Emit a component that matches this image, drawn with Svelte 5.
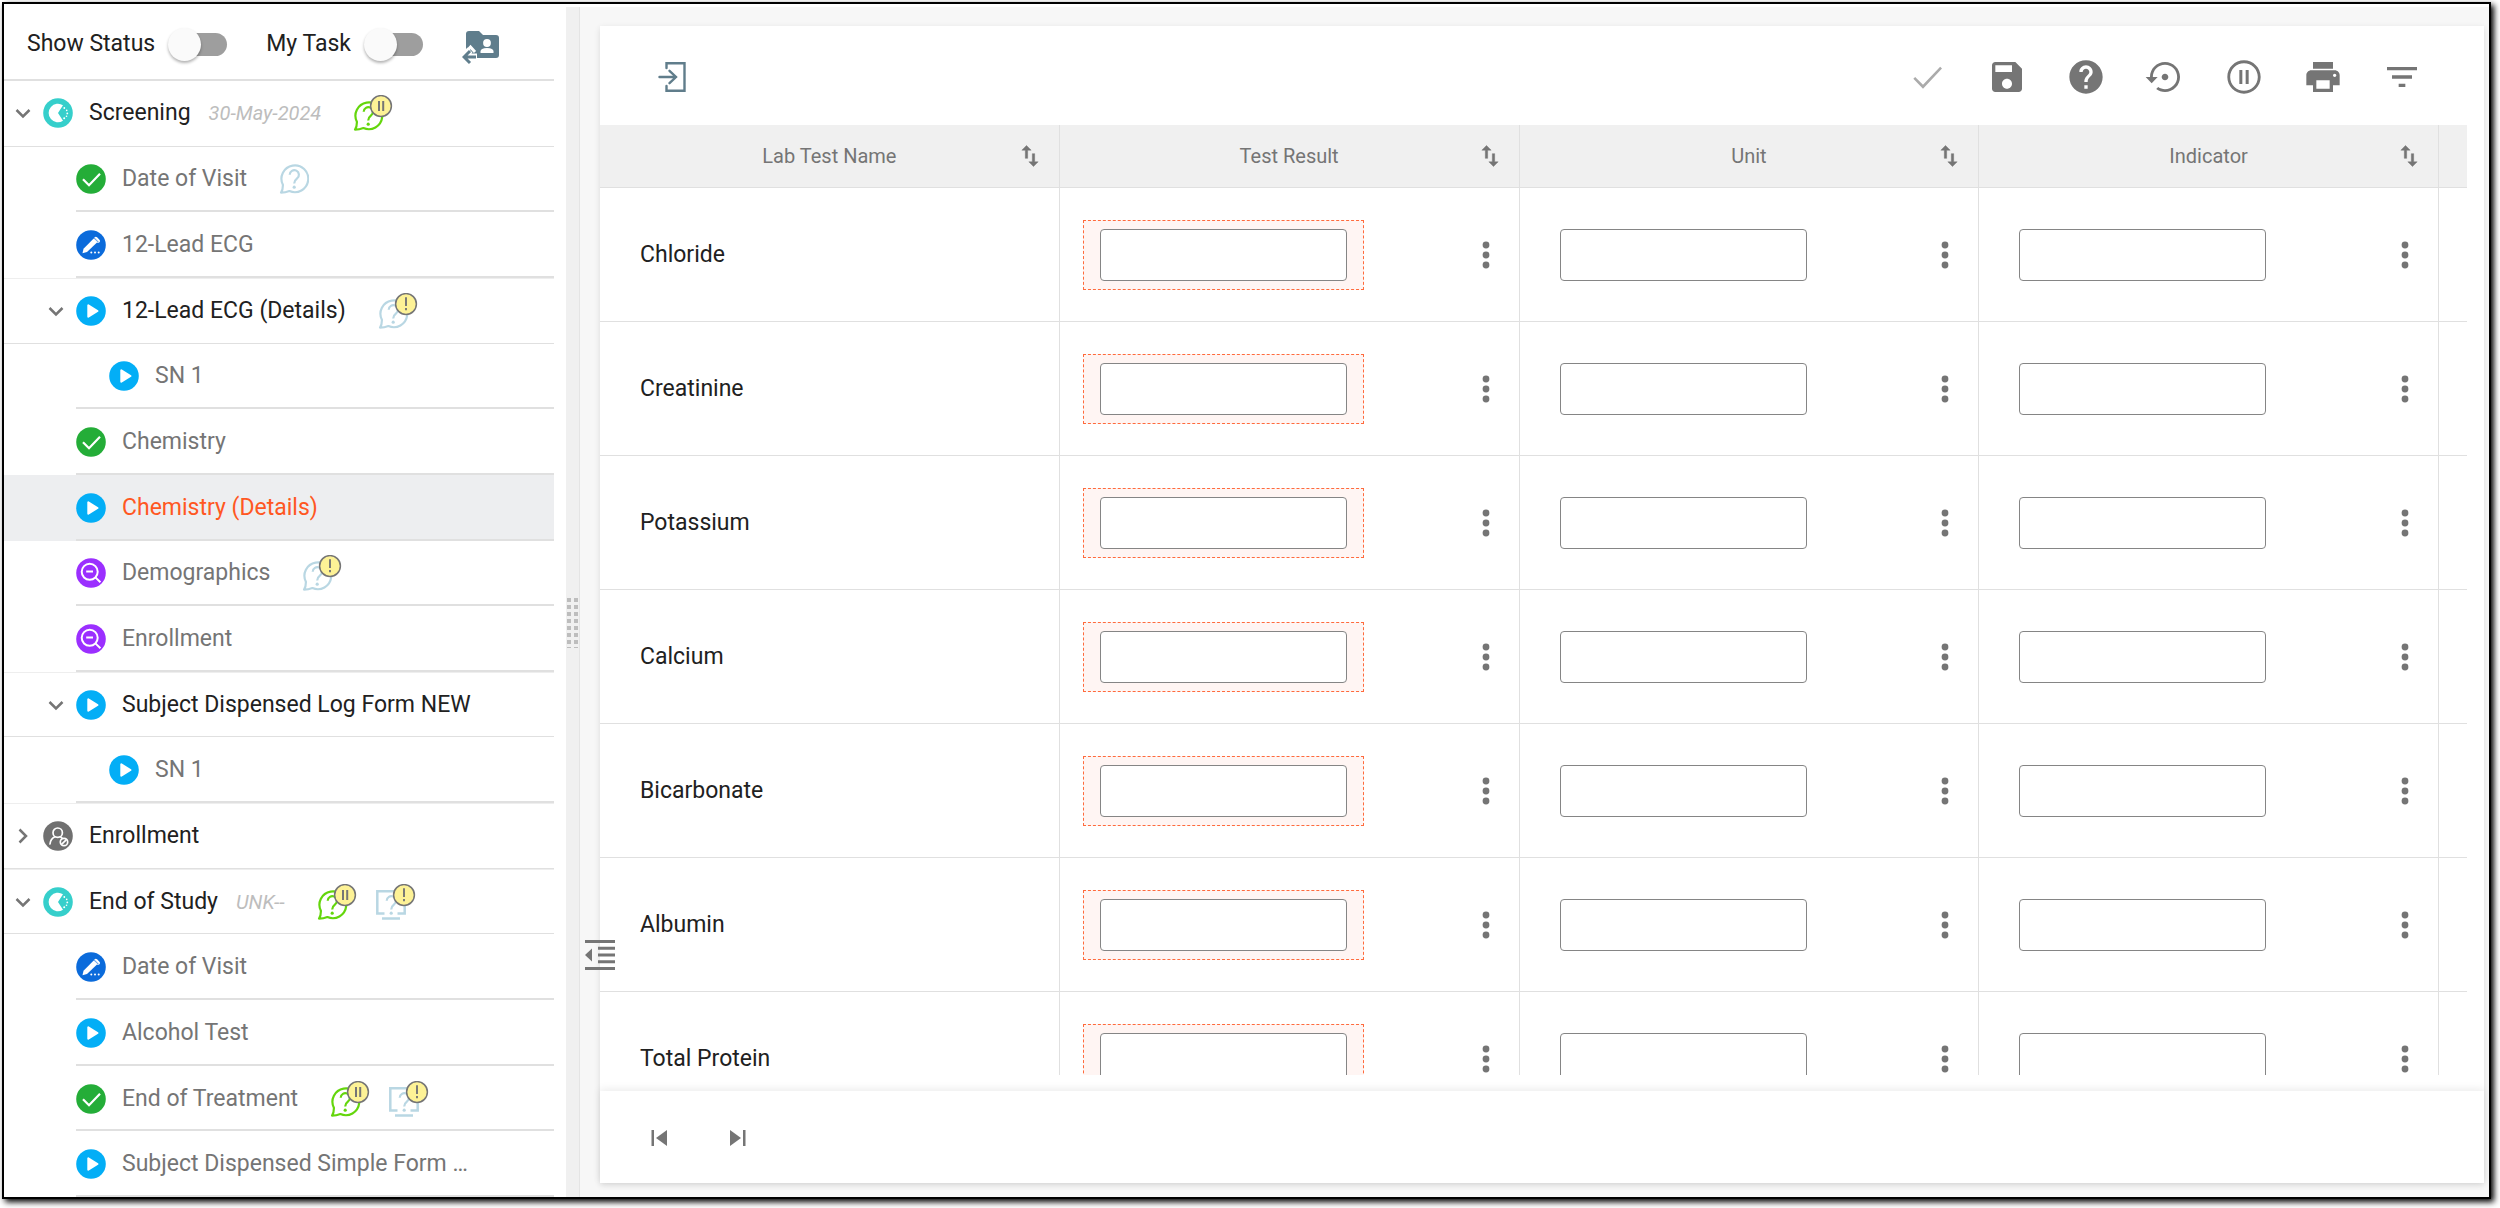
<script lang="ts">
	interface Query {
		kind: 'chat' | 'monitor';
		tone: 'green' | 'blue';
		badge?: 'pause' | 'alert';
	}

	interface TreeItem {
		label: string;
		level: number;
		status: string;
		date?: string;
		open?: boolean;
		selected?: boolean;
		queries?: Query[];
	}

	const items: TreeItem[] = [
		{
			label: 'Screening',
			level: 0,
			status: 'progress',
			date: '30-May-2024',
			open: true,
			queries: [{ kind: 'chat', tone: 'green', badge: 'pause' }]
		},
		{ label: 'Date of Visit', level: 1, status: 'done', queries: [{ kind: 'chat', tone: 'blue' }] },
		{ label: '12-Lead ECG', level: 1, status: 'edit' },
		{
			label: '12-Lead ECG (Details)',
			level: 1,
			status: 'play',
			open: true,
			queries: [{ kind: 'chat', tone: 'blue', badge: 'alert' }]
		},
		{ label: 'SN 1', level: 2, status: 'play' },
		{ label: 'Chemistry', level: 1, status: 'done' },
		{ label: 'Chemistry (Details)', level: 1, status: 'play', selected: true },
		{
			label: 'Demographics',
			level: 1,
			status: 'review',
			queries: [{ kind: 'chat', tone: 'blue', badge: 'alert' }]
		},
		{ label: 'Enrollment', level: 1, status: 'review' },
		{ label: 'Subject Dispensed Log Form NEW', level: 1, status: 'play', open: true },
		{ label: 'SN 1', level: 2, status: 'play' },
		{ label: 'Enrollment', level: 0, status: 'blocked', open: false },
		{
			label: 'End of Study',
			level: 0,
			status: 'progress',
			date: 'UNK--',
			open: true,
			queries: [
				{ kind: 'chat', tone: 'green', badge: 'pause' },
				{ kind: 'monitor', tone: 'blue', badge: 'alert' }
			]
		},
		{ label: 'Date of Visit', level: 1, status: 'edit' },
		{ label: 'Alcohol Test', level: 1, status: 'play' },
		{
			label: 'End of Treatment',
			level: 1,
			status: 'done',
			queries: [
				{ kind: 'chat', tone: 'green', badge: 'pause' },
				{ kind: 'monitor', tone: 'blue', badge: 'alert' }
			]
		},
		{ label: 'Subject Dispensed Simple Form …', level: 1, status: 'play' }
	];

	const columns = ['Lab Test Name', 'Test Result', 'Unit', 'Indicator'];

	const tests = [
		'Chloride',
		'Creatinine',
		'Potassium',
		'Calcium',
		'Bicarbonate',
		'Albumin',
		'Total Protein'
	];

	const tools = [
		{
			name: 'Save',
			path: 'M17 3H5c-1.11 0-2 .9-2 2v14c0 1.1.89 2 2 2h14c1.1 0 2-.9 2-2V7l-4-4zm-5 16c-1.66 0-3-1.34-3-3s1.34-3 3-3 3 1.34 3 3-1.34 3-3 3zm3-10H5V5h10v4z'
		},
		{
			name: 'Help',
			path: 'M12 2C6.48 2 2 6.48 2 12s4.48 10 10 10 10-4.48 10-10S17.52 2 12 2zm1 17h-2v-2h2v2zm2.07-7.75l-.9.92C13.45 12.9 13 13.5 13 15h-2v-.5c0-1.1.45-2.1 1.17-2.83l1.24-1.26c.37-.36.59-.86.59-1.41 0-1.1-.9-2-2-2s-2 .9-2 2H8c0-2.21 1.79-4 4-4s4 1.79 4 4c0 .88-.36 1.68-.93 2.25z'
		},
		{
			name: 'Restore',
			path: 'M14 12c0-1.1-.9-2-2-2s-2 .9-2 2 .9 2 2 2 2-.9 2-2zm-2-9c-4.97 0-9 4.03-9 9H.4L4 15.8 7.6 12H4.7c0-4.03 3.27-7.3 7.3-7.3s7.3 3.27 7.3 7.3-3.27 7.3-7.3 7.3c-1.51 0-2.91-.49-4.06-1.3l-1.22 1.24C8.24 20.3 9.94 21 12 21c4.97 0 9-4.03 9-9s-4.03-9-9-9z'
		},
		{
			name: 'Pause',
			path: 'M9.2 16.2H11V7.8H9.2v8.4zM12 2C6.48 2 2 6.48 2 12s4.48 10 10 10 10-4.48 10-10S17.52 2 12 2zm0 18.3c-4.58 0-8.3-3.72-8.3-8.3S7.42 3.7 12 3.7s8.3 3.72 8.3 8.3-3.72 8.3-8.3 8.3zm1-4.1h1.8V7.8H13v8.4z'
		},
		{
			name: 'Print',
			path: 'M19 8H5c-1.66 0-3 1.34-3 3v6h4v4h12v-4h4v-6c0-1.66-1.34-3-3-3zm-3 11H8v-5h8v5zm3-7c-.55 0-1-.45-1-1s.45-1 1-1 1 .45 1 1-.45 1-1 1zm-1-9H6v4h12V3z'
		},
		{ name: 'Filter', path: 'M10 18h4v-2h-4v2zM3 6v2h18V6H3zm3 7h12v-2H6v2z' }
	];
</script>

{#snippet statusIcon(kind: string)}
	<svg class="status {kind}" viewBox="0 0 30 30" aria-hidden="true">
		<circle cx="15" cy="15" r="14.8" fill="currentColor" />
		{#if kind === 'done'}
			<path d="M7 15.2l6 6L24 9.7" fill="none" stroke="#fff" stroke-width="2.2" />
		{:else if kind === 'play'}
			<path
				d="M12.3 9.3v11.4L21.5 15z"
				fill="#fff"
				stroke="#fff"
				stroke-width="2"
				stroke-linejoin="round"
			/>
		{:else if kind === 'edit'}
			<path d="M6.5 23.2l1-4.4L17.7 8.6l3.6 3.6L11 22z" fill="#fff" />
			<path d="M19.8 8.6l2.4 2.4" stroke="#fff" stroke-width="3.6" stroke-linecap="round" />
			<path d="M17.7 7.4l5 5" stroke="currentColor" stroke-width="0.8" />
			<circle cx="15.3" cy="22.4" r="1" fill="#fff" />
			<circle cx="19" cy="22.4" r="1" fill="#fff" />
			<circle cx="22.7" cy="22.4" r="1" fill="#fff" />
		{:else if kind === 'review'}
			<circle cx="13.7" cy="13.8" r="8" fill="none" stroke="#fff" stroke-width="2" />
			<path d="M10.2 13.4h6.8M19.4 19.4l5 4.8" stroke="#fff" stroke-width="2" />
		{:else if kind === 'blocked'}
			<g fill="none" stroke="#fff" stroke-width="1.7" stroke-linecap="round">
				<circle cx="14.7" cy="11.7" r="4.7" />
				<path d="M7 23c.4-3.8 2-6 5-7.2M17.2 15.8l1.6 1" />
				<circle cx="21" cy="21" r="3.7" />
				<path d="M18.6 23.4l4.8-4.8" />
			</g>
		{:else}
			<path d="M15 15L20 7.2A9.3 9.3 0 1 0 20 22.8z" fill="#fff" />
			<g fill="#fff">
				<circle cx="21.3" cy="10" r="0.9" />
				<circle cx="23.7" cy="12.4" r="0.8" />
				<circle cx="24.3" cy="15.4" r="0.9" />
				<circle cx="23.5" cy="18.2" r="0.8" />
				<circle cx="21.2" cy="20.3" r="1" />
			</g>
		{/if}
	</svg>
{/snippet}

{#snippet queryIcon(q: Query)}
	<svg
		class="query {q.tone}"
		class:badged={q.badge}
		viewBox={q.badge ? '0 -6 40 36' : '0 0 30 30'}
		role="img"
		aria-label="Query"
	>
		<g fill="none" stroke="currentColor" stroke-width="2.2">
			{#if q.kind === 'chat'}
				<path
					d="M3.9 20.8A13.4 13.4 0 1 1 10.4 27q-4 1.6-8.4 1.6Q4 26 3.9 20.8z"
					stroke-linejoin="round"
				/>
			{:else}
				<path d="M8.5 23.5H1.3V1.3h27.4v22.2h-7.2M6 28.6h18" stroke-width="2.5" />
			{/if}
			<path d="M10.7 10.7a4.6 4.6 0 1 1 7.4 3.7c-1.8 1.4-2.9 2.5-2.9 5" />
		</g>
		<circle cx="15.2" cy="23.2" r="1.6" fill="currentColor" />
		{#if q.badge}
			<circle cx="28" cy="5" r="10.4" fill="#fdf296" stroke="#757575" stroke-width="1.5" />
			{#if q.badge === 'pause'}
				<path d="M26 0v10M30.2 0v10" stroke="#757575" stroke-width="2" />
			{:else}
				<path d="M28-1.8V7M28 9v2.2" stroke="#757575" stroke-width="1.9" />
			{/if}
		{/if}
	</svg>
{/snippet}

<div class="window">
	<aside class="sidebar">
		<div class="side-head">
			<label class="switch">Show Status <input type="checkbox" role="switch" /></label>
			<label class="switch">My Task <input type="checkbox" role="switch" /></label>
			<button class="folder" aria-label="Switch subject">
				<svg viewBox="0 0 38 36" width="38" height="36">
					<path d="M4 4q0-3 3-3h10l4 4h13q3 0 3 3v17q0 3-3 3H4z" fill="#5f7d8c" />
					<circle cx="25" cy="13" r="3.9" fill="#fff" />
					<path d="M18.5 23v-1.5q0-3.5 6.5-3.5t6.5 3.5V23z" fill="#fff" />
					<path d="M1 27h14M8 20l-7 7 7 7" stroke="#fff" stroke-width="7" fill="none" />
					<path d="M4 22l4.5-5 4.500 5" stroke="#fff" stroke-width="3" fill="none" />
					<path d="M2 27h12M8 21l-6 6 6 6" stroke="#5f7d8c" stroke-width="3" fill="none" />
				</svg>
			</button>
		</div>

		<ul class="tree">
			{#each items as item}
				<li
					class="level-{item.level}"
					class:parent={item.open !== undefined}
					class:selected={item.selected}
				>
					<span class="toggle">
						{#if item.open !== undefined}
							<button aria-label="Toggle {item.label}" aria-expanded={item.open}>
								<svg viewBox="0 0 30 30" width="30" height="30">
									<path
										d={item.open ? 'M8.5 12l6.5 6.5 6.5-6.5' : 'M11.5 8.5L18 15l-6.5 6.5'}
										fill="none"
										stroke="#757575"
										stroke-width="2.5"
									/>
								</svg>
							</button>
						{/if}
					</span>
					{@render statusIcon(item.status)}
					<a href="#form">{item.label}</a>
					{#if item.date}<em>{item.date}</em>{/if}
					{#if item.queries}
						<span class="queries">
							{#each item.queries as q}
								{@render queryIcon(q)}
							{/each}
						</span>
					{/if}
				</li>
			{/each}
		</ul>
	</aside>

	<div class="splitter"><span class="grip"></span></div>

	<main>
		<button class="collapse" aria-label="Collapse sidebar">
			<svg viewBox="0 0 30 30" width="30" height="30">
				<path
					d="M0 1.5h30M13 8.2h17M13 15h17M13 21.7h17M0 28.5h30"
					stroke="#757575"
					stroke-width="3"
				/>
				<path d="M0 15l7-6.5v13z" fill="#757575" />
			</svg>
		</button>

		<section class="card">
			<div class="toolbar">
				<button aria-label="Exit form">
					<svg viewBox="0 0 40 40" width="40" height="40">
						<path
							d="M14.5 11V6.2h18v27.6h-18V29M7.5 20H24M17.5 13.8l6.5 6.2-6.5 6.2"
							fill="none"
							stroke="#607d8b"
							stroke-width="2.4"
							stroke-linecap="round"
						/>
					</svg>
				</button>
				<div class="tools">
					<button class="off" aria-label="Submit" disabled>
						<svg viewBox="0 0 24 24" width="40" height="40">
							<path d="M9 16.7L4.3 12l-1.1 1.1L9 19 20.4 6.900l-1.100-1.100z" />
						</svg>
					</button>
					{#each tools as tool}
						<button aria-label={tool.name}>
							<svg viewBox="0 0 24 24" width="40" height="40"><path d={tool.path} /></svg>
						</button>
					{/each}
				</div>
			</div>

			<div class="grid">
				<table>
					<thead>
						<tr>
							{#each columns as col}
								<th>
									<div class="head">
										<span>{col}</span>
										<button aria-label="Sort by {col}">
											<svg viewBox="0 0 24 24" width="28" height="28">
												<path
													d="M16 17.01V10h-2v7.01h-3L15 21l4-3.99h-3zM9 3L5 6.99h3V14h2V6.99h3L9 3z"
													stroke="currentColor"
													stroke-width="0.4"
												/>
											</svg>
										</button>
									</div>
								</th>
							{/each}
							<th class="last"></th>
						</tr>
					</thead>
					<tbody>
						{#each tests as test}
							<tr>
								<td class="name">{test}</td>
								{#each columns.slice(1) as col, i}
									<td>
										<div class="cell">
											<span class="field" class:required={i === 0}>
												<input type="text" aria-label="{test} {col}" />
											</span>
											<button aria-label="{test} {col} options">
												<svg viewBox="0 0 40 40" width="40" height="40">
													<circle cx="20" cy="10" r="3.4" />
													<circle cx="20" cy="20" r="3.4" />
													<circle cx="20" cy="30" r="3.4" />
												</svg>
											</button>
										</div>
									</td>
								{/each}
								<td class="last"></td>
							</tr>
						{/each}
					</tbody>
				</table>
			</div>

			<footer>
				<button aria-label="Previous form">
					<svg viewBox="0 0 40 40" width="40" height="40">
						<path d="M12.5 12H15v16h-2.5zM28 12v16l-11-8z" />
					</svg>
				</button>
				<button aria-label="Next form">
					<svg viewBox="0 0 40 40" width="40" height="40">
						<path d="M12 12v16l11-8zM25 12h2.5v16H25z" />
					</svg>
				</button>
			</footer>
		</section>
	</main>
</div>

<style>
	:global(body) {
		background: #fff;
	}

	.window {
		box-sizing: border-box;
		display: grid;
		grid-template-columns: 562px 14px minmax(0, 1fr);
		height: calc(100vh - 11px);
		margin: 2px 9px 9px 2px;
		padding-top: 3px;
		border: 2px solid #000;
		background: #fff;
		box-shadow: 3px 3px 6px #000;
		font-family: Roboto, sans-serif;
		font-size: 23px;
		line-height: 28px;
		color: #212121;
	}

	button {
		display: flex;
		padding: 0;
		border: 0;
		background: none;
		color: #757575;
	}

	button svg {
		display: block;
		fill: currentColor;
	}

	.sidebar {
		display: flex;
		flex-direction: column;
		min-height: 0;
		padding-right: 12px;
		overflow: hidden;
	}

	.side-head {
		display: flex;
		align-items: center;
		gap: 39px;
		height: 70px;
		padding: 2px 0 0 23px;
		border-bottom: 2px solid #e0e0e0;
	}

	.switch {
		display: flex;
		align-items: center;
		gap: 13px;
	}

	.switch input {
		appearance: none;
		display: flex;
		align-items: center;
		width: 59px;
		height: 23px;
		margin: 0;
		border-radius: 12px;
		background: linear-gradient(90deg, transparent 12px, #9e9e9e 12px);
	}

	.switch input::before {
		content: '';
		width: 33px;
		height: 33px;
		border-radius: 50%;
		background: #fafafa;
		box-shadow: 0 2px 3px rgba(0, 0, 0, 0.3);
	}

	.folder {
		padding-top: 8px;
	}

	.tree {
		flex: 1;
		display: grid;
		grid-auto-rows: 1fr;
		margin: 0;
		padding: 0;
		list-style: none;
	}

	li {
		display: flex;
		align-items: center;
		padding-left: 4px;
		background: linear-gradient(#e0e0e0, #e0e0e0) 72px 100% / 100% 2px no-repeat;
		color: #757575;
		white-space: nowrap;
	}

	li.level-1 {
		padding-left: 37px;
	}

	li.level-2 {
		padding-left: 70px;
	}

	li.parent {
		border-top: 1px solid #eee;
		border-bottom: 1px solid #e0e0e0;
		background: none;
		color: #212121;
	}

	li.parent:first-child {
		border-top: 0;
	}

	li.selected {
		background-color: #edeef0;
		color: #ff5722;
	}

	li a {
		color: inherit;
		text-decoration: none;
	}

	li em {
		margin-left: 18px;
		font-size: 20px;
		color: #bdbdbd;
	}

	.toggle {
		width: 30px;
		margin-right: 5px;
	}

	.status {
		flex: none;
		width: 30px;
		height: 30px;
		margin-right: 16px;
	}

	.progress {
		color: #36cfcb;
	}

	.done {
		color: #24ad38;
	}

	.edit {
		color: #0b6bdb;
	}

	.play {
		color: #03aef6;
	}

	.review {
		color: #9b2fff;
	}

	.blocked {
		color: #707070;
	}

	.queries {
		display: flex;
		gap: 19px;
		margin-left: 32px;
	}

	.query {
		width: 30px;
		height: 30px;
	}

	.query.badged {
		width: 40px;
		height: 36px;
	}

	.query.green {
		color: #64d60c;
	}

	.query.blue {
		color: #b9d7e3;
	}

	.splitter {
		box-sizing: border-box;
		display: flex;
		align-items: center;
		justify-content: center;
		border-right: 1px solid #e4e4e4;
		background: #f0f0f0;
	}

	.grip {
		width: 11px;
		height: 50px;
		margin-top: 42px;
		background:
			repeating-linear-gradient(transparent 0 4px, #f0f0f0 4px 7px),
			repeating-linear-gradient(90deg, #bdbdbd 0 4px, #f0f0f0 4px 7px);
	}

	main {
		position: relative;
		display: flex;
		min-height: 0;
		padding: 19px 5px 14px 20px;
		background: #f7f7f7;
	}

	.collapse {
		position: absolute;
		left: 5px;
		bottom: 227px;
		z-index: 1;
	}

	.card {
		flex: 1;
		display: flex;
		flex-direction: column;
		min-width: 0;
		background: #fff;
		box-shadow: 0 2px 6px rgba(0, 0, 0, 0.12);
	}

	.toolbar {
		display: flex;
		justify-content: space-between;
		padding: 31px 62px 28px 52px;
	}

	.tools {
		display: flex;
		gap: 39px;
	}

	.off {
		color: #ababab;
	}

	.grid {
		flex: 1;
		min-height: 0;
		margin: 0 17px 16px 0;
		overflow: hidden;
	}

	table {
		width: 100%;
		table-layout: fixed;
		border-spacing: 0;
	}

	th,
	td {
		padding: 0;
		border-right: 1px solid #e0e0e0;
		border-bottom: 1px solid #e0e0e0;
	}

	th {
		height: 62px;
		background: #f0f0f0;
		font-size: 20px;
		font-weight: 400;
		color: #757575;
	}

	td {
		height: 133px;
	}

	.last {
		width: 28px;
		border-right: 0;
	}

	.head {
		display: grid;
		grid-template-columns: 1fr auto 1fr;
		align-items: center;
		padding: 0 15px;
	}

	.head span {
		grid-column: 2;
	}

	.head button {
		justify-self: end;
	}

	.name {
		padding-left: 40px;
	}

	.cell {
		display: flex;
		align-items: center;
		justify-content: space-between;
		padding: 0 13px 0 23px;
	}

	.field {
		display: flex;
		padding: 8px 16px;
		border: 1px solid transparent;
	}

	.field.required {
		border: 1px dashed #ff6b3d;
		background: #fff5f3;
	}

	.field input {
		box-sizing: border-box;
		width: 247px;
		height: 52px;
		padding: 0 12px;
		border: 1px solid #858585;
		border-radius: 4px;
		background: #fff;
		font: inherit;
	}

	footer {
		display: flex;
		gap: 39px;
		padding: 27px 39px 25px;
		box-shadow: 0 -2px 8px rgba(0, 0, 0, 0.08);
	}
</style>
